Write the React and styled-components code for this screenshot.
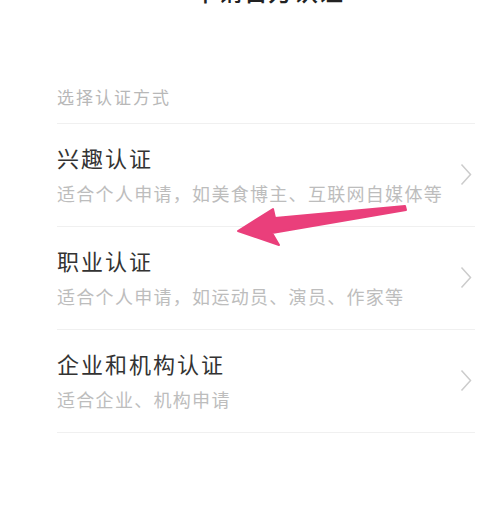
import React from 'react';
import styled, { createGlobalStyle } from 'styled-components';

const GlobalStyle = createGlobalStyle`
  body {
    margin: 0;
    background: #ffffff;
    font-family: 'Noto Sans CJK SC', 'Noto Sans', sans-serif;
  }
`;

const Page = styled.div`
  position: relative;
  width: 479px;
  min-height: 520px;
  background: #ffffff;
  overflow: hidden;
`;

const Header = styled.div`
  height: 72px;
  overflow: hidden;
`;

const HeaderTitle = styled.div`
  margin-top: -22px;
  padding-left: 193px;
  font-size: 25px;
  line-height: 25px;
  font-weight: 500;
  color: #222222;
`;

const List = styled.div`
  padding: 0 4px 0 57px;
`;

const SectionLabel = styled.div`
  padding: 13px 0 14px;
  font-size: 17px;
  line-height: 24px;
  letter-spacing: 2px;
  color: #b8b8b8;
  border-bottom: 1px solid #f0f0f0;
`;

const Row = styled.div`
  display: flex;
  align-items: center;
  padding: 19px 0 20px;
  border-bottom: 1px solid #f0f0f0;
`;

const RowText = styled.div`
  flex: 1;
  display: flex;
  flex-direction: column;
  gap: 10px;
`;

const RowTitle = styled.div`
  font-size: 22px;
  line-height: 28px;
  letter-spacing: 2px;
  color: #333333;
`;

const RowDesc = styled.div`
  font-size: 18px;
  line-height: 25px;
  letter-spacing: 1.3px;
  color: #bdbdbd;
`;

const Chevron = styled.svg`
  width: 12px;
  height: 23px;
  margin-right: 3px;
  flex-shrink: 0;
`;

const Annotation = styled.svg`
  position: absolute;
  top: 0;
  left: 0;
  pointer-events: none;
`;

const items = [
  { title: '兴趣认证', desc: '适合个人申请，如美食博主、互联网自媒体等' },
  { title: '职业认证', desc: '适合个人申请，如运动员、演员、作家等' },
  { title: '企业和机构认证', desc: '适合企业、机构申请' },
];

export default function App() {
  return (
    <Page>
      <GlobalStyle />
      <Header>
        <HeaderTitle>申请官方认证</HeaderTitle>
      </Header>
      <List>
        <SectionLabel>选择认证方式</SectionLabel>
        {items.map((item) => (
          <Row key={item.title}>
            <RowText>
              <RowTitle>{item.title}</RowTitle>
              <RowDesc>{item.desc}</RowDesc>
            </RowText>
            <Chevron viewBox="0 0 12 23">
              <path d="M1.5 1.5 L10.5 11.5 L1.5 21.5" fill="none" stroke="#cccccc" strokeWidth="1.5" />
            </Chevron>
          </Row>
        ))}
      </List>
      <Annotation width="479" height="520" viewBox="0 0 479 520">
        <path
          d="M238 231 L273 209 L275 218 L405 206 L406 210 L272 233 L279 245 Z"
          fill="#ea3f7b"
          stroke="#ea3f7b"
          strokeWidth="2"
          strokeLinejoin="round"
        />
      </Annotation>
    </Page>
  );
}
